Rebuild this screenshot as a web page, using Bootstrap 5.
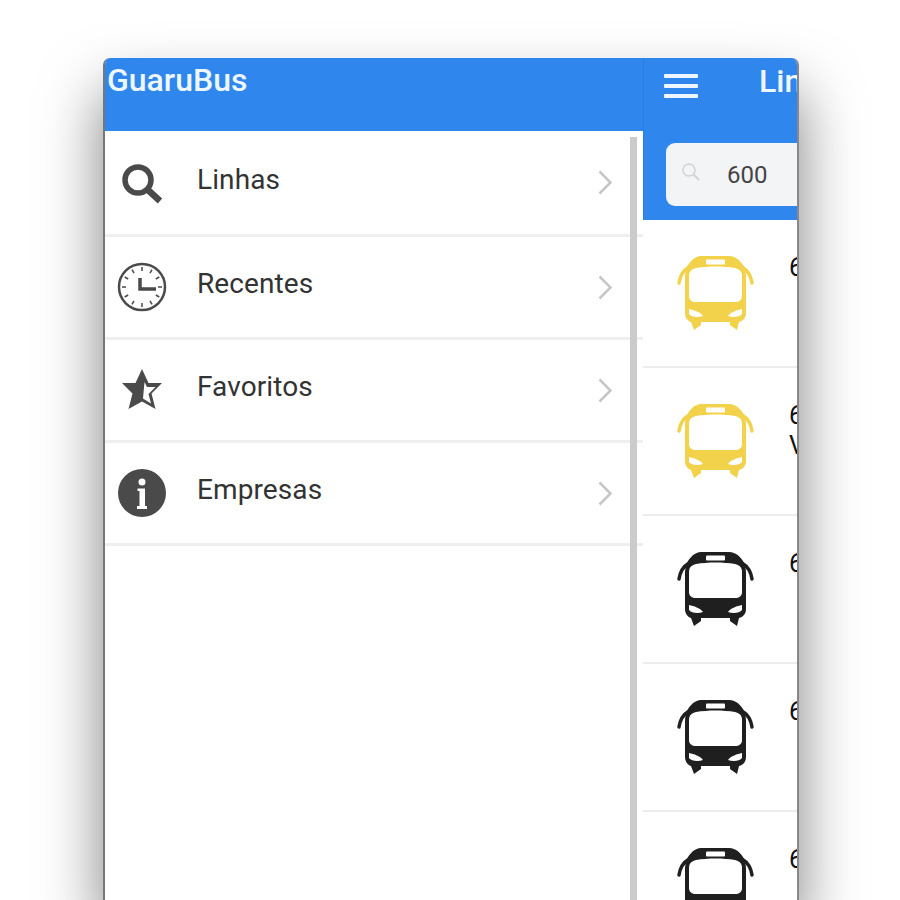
<!DOCTYPE html>
<html lang="pt-br">
<head>
    <meta charset="UTF-8" />
    <meta name="viewport" content="width=device-width, initial-scale=1" />
    <title>GuaruBus</title>
    <link href="https://cdn.jsdelivr.net/npm/bootstrap@5.3.0/dist/css/bootstrap.min.css" rel="stylesheet" />
    <style>
        html, body {
            height: 900px;
            overflow: hidden;
            background-color: #fff;
        }
        body {
            font-family: Roboto, "Liberation Sans", sans-serif;
            padding: 58px 100px 0 103px;
        }
        .aparelho {
            width: 696px;
            height: 842px;
            border-radius: 7px 7px 0 0;
            border-left: 2px solid #777;
            border-right: 2px solid #888;
            box-shadow: 0 34px 60px rgba(0,0,0,.5);
            background-color: #fff;
            overflow: hidden;
        }
        .gaveta {
            width: 538px;
            flex-shrink: 0;
            position: relative;
        }
        .gaveta-topo {
            height: 73px;
            background-color: #2f87ee;
            color: #eef7ff;
            font-size: 32px;
            font-weight: 500;
            line-height: 44px;
            padding-left: 2px;
        }
        .barra-rolagem {
            position: absolute;
            top: 79px;
            bottom: 0;
            left: 525px;
            width: 7px;
            background-color: #cbcbcb;
            z-index: 5;
        }
        .menu-item {
            --bs-list-group-border-width: 3px;
            --bs-list-group-border-color: #efefef;
            height: 103px;
            padding: 0 0 0 11px;
            color: #333;
            font-size: 28px;
            letter-spacing: .1px;
        }
        .menu-item:first-child { height: 106px; }
        .list-group-flush > .menu-item:last-child { border-bottom-width: 3px; }
        .menu-icone {
            width: 52px;
            height: 52px;
            margin-right: 29px;
            flex-shrink: 0;
        }
        .menu-texto {
            position: relative;
            bottom: 3px;
        }
        .seta {
            width: 14px;
            height: 25px;
            margin: 0 31px 0 auto;
        }
        .conteudo {
            flex: 1 1 0;
            min-width: 0;
            overflow: hidden;
        }
        .conteudo-topo {
            height: 162px;
            background-color: #2f87ee;
            border-left: 1px solid #2a7ede;
            padding: 16px 0 0 20px;
            color: #eef7ff;
        }
        .hamburguer {
            width: 34px;
            height: 24px;
            margin-right: 61px;
            flex-shrink: 0;
        }
        .hamburguer span {
            display: block;
            height: 4px;
            background-color: #eef7ff;
            border-radius: 1px;
        }
        .titulo-tela {
            font-size: 32px;
            font-weight: 500;
            line-height: 1;
            margin-top: -9px;
            white-space: nowrap;
        }
        .busca {
            width: 200px;
            height: 63px;
            margin-top: 45px;
            margin-left: 2px;
            background-color: #f3f4f6;
            border-radius: 9px;
            color: #444;
            font-size: 24px;
            padding-left: 15px;
        }
        .busca svg {
            width: 20px;
            height: 20px;
            margin-right: 26px;
            position: relative;
            bottom: 3px;
        }
        .linha-item {
            height: 148px;
            padding-left: 33px;
            padding-top: 1px;
            border-bottom: 2px solid #ececec;
            font-size: 25px;
            white-space: nowrap;
        }
        .linha-item svg {
            width: 78px;
            height: 78px;
            flex-shrink: 0;
            margin-right: 35px;
        }
        .linha-texto {
            line-height: 30px;
            margin-top: 32px;
            color: #111;
        }
        .onibus-amarelo { color: #f2d24b; }
        .onibus-preto { color: #1f1f1f; }
    </style>
</head>
<body>

    <svg width="0" height="0" class="position-absolute">
        <symbol id="onibus" viewBox="0 0 78 78">
            <path d="M13 12C8 15 4 21 3 28M66 12C71 15 75 21 76 28" fill="none" stroke="currentColor" stroke-width="3.5" stroke-linecap="round"/>
            <path fill="currentColor" d="M25 1H53C60 1 65 6 68 12C69 15 70 18 70 22V58C70 63 67 66 63 67L61 75L54 70V67H25V70L18 75L15 67C12 66 9 63 9 58V22C9 18 10 15 11 12C14 6 19 1 25 1Z"/>
            <path fill="#fff" d="M20 13C32 11 47 11 59 13C63 14 66 16 66 21V41C66 45 63 47 59 47H20C16 47 13 45 13 41V21C13 16 16 14 20 13Z"/>
            <rect x="30" y="4.5" width="19" height="5" rx="1" fill="#fff"/>
            <path fill="#fff" d="M13 54C18 55 24 57 27 61C22 63 15 62 13 59ZM66 54C61 55 55 57 52 61C57 63 64 62 66 59Z"/>
        </symbol>
    </svg>

    <div class="aparelho d-flex">
        <aside class="gaveta">
            <div class="gaveta-topo">GuaruBus</div>
            <div class="barra-rolagem"></div>
            <div class="list-group list-group-flush">
                <a class="list-group-item menu-item d-flex align-items-center">
                    <svg class="menu-icone" viewBox="0 0 52 52">
                        <circle cx="22" cy="23" r="13" fill="none" stroke="#4a4a4a" stroke-width="5.5"/>
                        <path d="M32 33L44 44" stroke="#4a4a4a" stroke-width="6.5"/>
                    </svg>
                    <span class="menu-texto">Linhas</span>
                    <svg class="seta" viewBox="0 0 14 25"><path d="M1.5 1.5L12.5 12.5L1.5 23.5" fill="none" stroke="#c6c6c6" stroke-width="2.5"/></svg>
                </a>
                <a class="list-group-item menu-item d-flex align-items-center">
                    <svg class="menu-icone" viewBox="0 0 52 52">
                        <circle cx="26" cy="26" r="23" fill="none" stroke="#4a4a4a" stroke-width="2.5"/>
                        <path d="M26 6V10M26 42V46M6 26H10M42 26H46M16 8.7L18 12.2M36 8.7L34 12.2M16 43.3L18 39.8M36 43.3L34 39.8M8.7 16L12.2 18M43.3 16L39.8 18M8.7 36L12.2 34M43.3 36L39.8 34" stroke="#4a4a4a" stroke-width="1.5"/>
                        <path d="M24 17V28H40" fill="none" stroke="#4a4a4a" stroke-width="3.5"/>
                    </svg>
                    <span class="menu-texto">Recentes</span>
                    <svg class="seta" viewBox="0 0 14 25"><path d="M1.5 1.5L12.5 12.5L1.5 23.5" fill="none" stroke="#c6c6c6" stroke-width="2.5"/></svg>
                </a>
                <a class="list-group-item menu-item d-flex align-items-center">
                    <svg class="menu-icone" viewBox="0 0 52 52">
                        <path d="M26 5L32.5 19H46L35.5 29.5L39.5 45L26 37.5L12.5 45L16.5 29.5L6 19H19.5Z" fill="#4a4a4a"/>
                        <path d="M28.5 18L31 23H39.5L32.5 30L35 39.5L27 34.5Z" fill="#fff"/>
                    </svg>
                    <span class="menu-texto">Favoritos</span>
                    <svg class="seta" viewBox="0 0 14 25"><path d="M1.5 1.5L12.5 12.5L1.5 23.5" fill="none" stroke="#c6c6c6" stroke-width="2.5"/></svg>
                </a>
                <a class="list-group-item menu-item d-flex align-items-center">
                    <svg class="menu-icone" viewBox="0 0 52 52">
                        <circle cx="26" cy="26" r="24" fill="#4a4a4a"/>
                        <circle cx="26" cy="15" r="3.5" fill="#fff"/>
                        <path d="M21.5 21.5H29V39H31V42H21V39H23.5V24H21.5Z" fill="#fff"/>
                    </svg>
                    <span class="menu-texto">Empresas</span>
                    <svg class="seta" viewBox="0 0 14 25"><path d="M1.5 1.5L12.5 12.5L1.5 23.5" fill="none" stroke="#c6c6c6" stroke-width="2.5"/></svg>
                </a>
            </div>
        </aside>

        <main class="conteudo">
            <div class="conteudo-topo">
                <div class="d-flex">
                    <div class="hamburguer d-flex flex-column justify-content-between"><span></span><span></span><span></span></div>
                    <div class="titulo-tela">Linhas</div>
                </div>
                <div class="busca d-flex align-items-center">
                    <svg viewBox="0 0 20 20">
                        <circle cx="8" cy="8" r="6" fill="none" stroke="#d2d2d2" stroke-width="1.5"/>
                        <path d="M12.5 12.5L18 18" stroke="#d2d2d2" stroke-width="2"/>
                    </svg>
                    <span>600</span>
                </div>
            </div>
            <div class="linha-item d-flex align-items-center onibus-amarelo">
                <svg><use href="#onibus"/></svg>
                <div class="linha-texto align-self-start">600</div>
            </div>
            <div class="linha-item d-flex align-items-center onibus-amarelo">
                <svg><use href="#onibus"/></svg>
                <div class="linha-texto align-self-start">600<br />V</div>
            </div>
            <div class="linha-item d-flex align-items-center onibus-preto">
                <svg><use href="#onibus"/></svg>
                <div class="linha-texto align-self-start">600</div>
            </div>
            <div class="linha-item d-flex align-items-center onibus-preto">
                <svg><use href="#onibus"/></svg>
                <div class="linha-texto align-self-start">600</div>
            </div>
            <div class="linha-item d-flex align-items-center onibus-preto">
                <svg><use href="#onibus"/></svg>
                <div class="linha-texto align-self-start">600</div>
            </div>
        </main>
    </div>

    <script src="https://cdn.jsdelivr.net/npm/bootstrap@5.3.0/dist/js/bootstrap.bundle.min.js"></script>
</body>
</html>
